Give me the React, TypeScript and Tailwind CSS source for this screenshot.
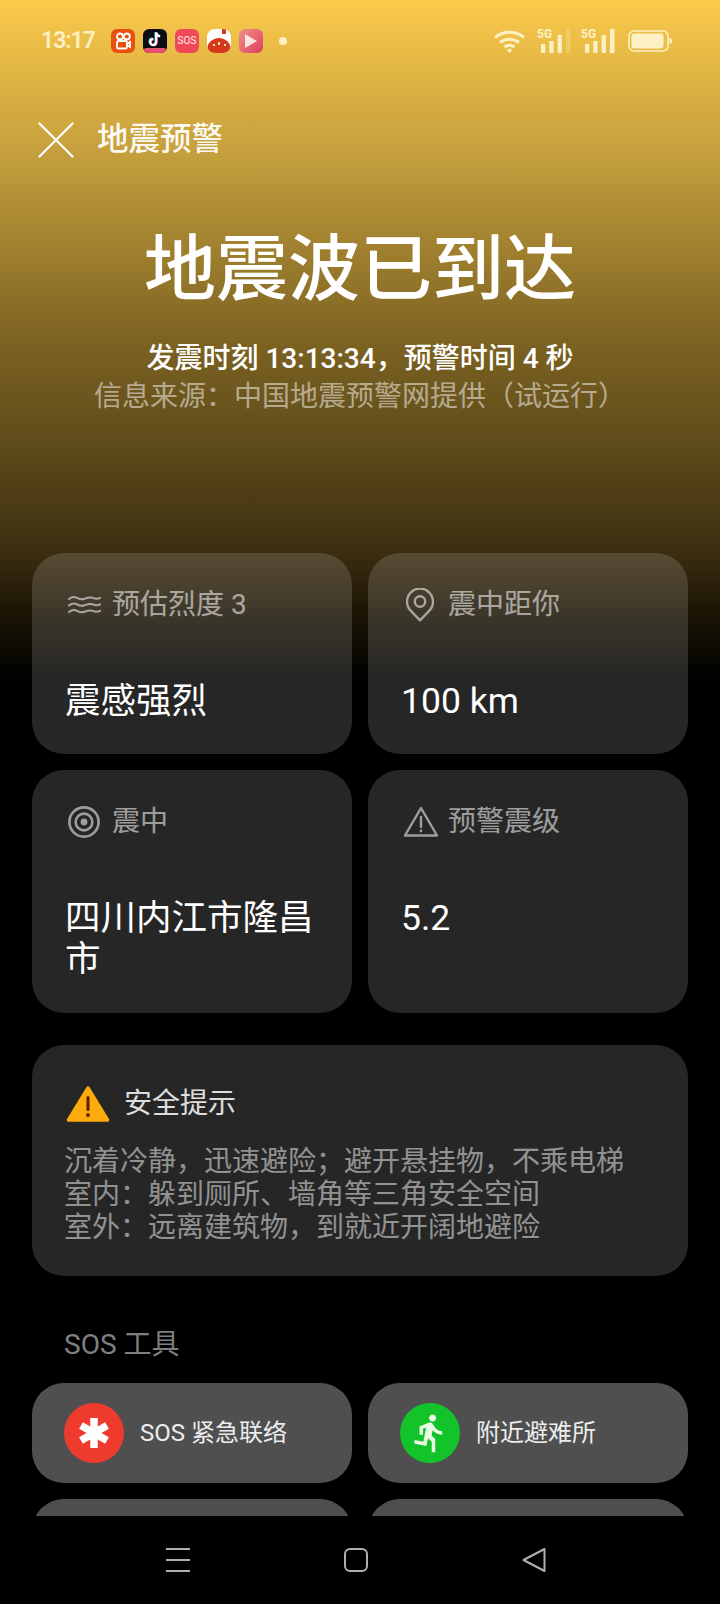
import { MdDirectionsRun } from 'react-icons/md';

const font = { fontFamily: 'Roboto, "Noto Sans CJK SC", sans-serif' };

function Waves() {
  return (
    <svg className="ml-[3px]" width="33" height="20" viewBox="0 0 33 20" fill="none" stroke="currentColor" strokeWidth="2" strokeLinecap="round">
      <path d="M1 4c3-2.600 5.500-2.600 8-1.200s5 2 7.500 1 5-2.200 8-1 5 1.600 7.500 0" />
      <path d="M1 10.500c3-2.600 5.500-2.600 8-1.200s5 2 7.500 1 5-2.200 8-1 5 1.600 7.500 0" />
      <path d="M1 17c3-2.600 5.500-2.600 8-1.200s5 2 7.500 1 5-2.200 8-1 5 1.600 7.500 0" />
    </svg>
  );
}

function Pin() {
  return (
    <svg className="ml-[5px]" width="28" height="34" viewBox="0 0 28 34" fill="none" stroke="currentColor" strokeWidth="2.400">
      <path d="M14 32.300 4.600 22.600A13 13 0 1 1 23.400 22.600Z" strokeLinejoin="round" />
      <circle cx="14" cy="13.500" r="5.200" />
    </svg>
  );
}

function Target() {
  return (
    <svg className="ml-[3px]" width="32" height="32" viewBox="0 0 32 32" fill="none" stroke="currentColor">
      <circle cx="16" cy="16" r="14.600" strokeWidth="2.600" />
      <circle cx="16" cy="16" r="8.400" strokeWidth="2.600" />
      <circle cx="16" cy="16" r="3.400" fill="currentColor" stroke="none" />
    </svg>
  );
}

function Warn() {
  return (
    <svg className="ml-[2px]" width="36" height="32" viewBox="0 0 36 32" fill="none" stroke="currentColor" strokeWidth="2.400" strokeLinejoin="round">
      <path d="M18 2 34 29.500H2Z" />
      <path d="M18 11v10" strokeLinecap="round" />
      <circle cx="18" cy="25" r="1.400" fill="currentColor" stroke="none" />
    </svg>
  );
}

function InfoCard({ icon, label, value, tall }: { icon: React.ReactNode; label: string; value: string; tall?: boolean }) {
  return (
    <div className={`rounded-[32px] bg-white/15 pl-[33px] pr-[32px] pt-[33px] ${tall ? 'h-[243px]' : 'h-[201px]'}`}>
      <div className="flex h-[38px] items-center text-white/55">
        <div className="flex w-[47px] justify-start">{icon}</div>
        <span className="text-[28px] leading-[38px]">{label}</span>
      </div>
      <div className="mt-[57px] text-[35.5px] leading-[41px] text-white">{value}</div>
    </div>
  );
}

function StatusIcons() {
  const bars = (last: string) => (
    <svg width="36" height="26" viewBox="0 0 36 26" fill="#fdf0c4">
      <text x="0" y="10" fontSize="12" fontWeight="700" style={font}>5G</text>
      <rect x="4" y="16" width="4.300" height="9" />
      <rect x="12.300" y="13" width="4.300" height="12" />
      <rect x="20.600" y="7" width="4.300" height="18" />
      <rect x="28.900" y="1" width="4.600" height="24" opacity={last} />
    </svg>
  );
  return (
    <div className="flex items-center">
      <svg width="33" height="25" viewBox="0 0 33 25" fill="none" stroke="#fdf0c4" strokeWidth="3">
        <path d="M2 8.500C10 1.500 23 1.500 31 8.500" />
        <path d="M7 13.500c5.500-4.500 13.500-4.500 19 0" />
        <path d="M11.500 18c3-2.200 7-2.200 10 0" />
        <path d="M14 21.500 16.500 19l2.500 2.500-2.500 2.500Z" fill="#fdf0c4" stroke="none" />
      </svg>
      <div className="ml-[11px]">{bars('0.25')}</div>
      <div className="ml-[8px]">{bars('1')}</div>
      <svg className="ml-[11px]" width="44" height="22" viewBox="0 0 44 22" fill="none">
        <rect x="1" y="1" width="39" height="20" rx="5" stroke="#fdf0c4" strokeWidth="1.600" />
        <rect x="3.500" y="3.500" width="32" height="15" rx="3" fill="#fdf0c4" />
        <path d="M41.500 8c1.500 0 2.500 1 2.500 3s-1 3-2.500 3Z" fill="#fdf0c4" />
      </svg>
    </div>
  );
}

function AppIcons() {
  return (
    <div className="ml-[18px] flex items-center gap-[8px]">
      <div className="h-[24px] w-[24px] rounded-[6px] bg-[#e8500f]">
        <svg width="24" height="24" viewBox="0 0 24 24" fill="none" stroke="#fff" strokeWidth="1.800">
          <circle cx="9" cy="7.500" r="3" />
          <circle cx="15.800" cy="7.500" r="3" />
          <rect x="6" y="12" width="10" height="7.500" rx="1.500" />
          <path d="M16 15l3-2v5l-3-2" />
        </svg>
      </div>
      <div className="relative h-[24px] w-[24px] overflow-hidden rounded-[6px] bg-[#0c0c14]">
        <svg width="24" height="24" viewBox="0 0 24 24" fill="none" strokeWidth="2.200">
          <path d="M13.200 3.500v9.500a3 3 0 1 1-3-3" stroke="#25f4ee" transform="translate(-0.600 -0.400)" />
          <path d="M13.200 3.500v9.500a3 3 0 1 1-3-3" stroke="#fe2c55" transform="translate(0.600 0.400)" />
          <path d="M13.200 3.500v9.500a3 3 0 1 1-3-3M13.200 3.500c.3 2.400 1.800 3.600 4 3.800" stroke="#fff" />
        </svg>
        <div className="absolute bottom-0 left-[1px] right-[1px] h-[5px] rounded-[2px] bg-[#e8506e]" />
      </div>
      <div className="flex h-[24px] w-[24px] items-center justify-center rounded-[6px] bg-[#f04a58] text-[10px] leading-none text-white/90">SOS</div>
      <div className="relative h-[24px] w-[24px] overflow-hidden rounded-[8px] bg-white">
        <div className="absolute bottom-0 left-0 right-0 h-[15px] rounded-t-[12px] bg-[#d5381a]" />
        <div className="absolute left-[15px] top-0 h-[5px] w-[4px] bg-[#d5381a]" />
        <div className="absolute left-[11px] top-[13px] h-[3px] w-[2px] bg-[#ffe0b0]" />
        <div className="absolute left-[6px] top-[15px] h-[2px] w-[2px] bg-[#ffe0b0]" />
        <div className="absolute left-[17px] top-[15px] h-[2px] w-[2px] bg-[#ffe0b0]" />
      </div>
      <div className="flex h-[24px] w-[24px] items-center justify-center rounded-[6px] bg-gradient-to-br from-[#f09088] to-[#dc3a5e]">
        <svg width="14" height="16" viewBox="0 0 14 16">
          <path d="M1 1 13 8 1 15Z" fill="#fde4dc" />
        </svg>
      </div>
      <div className="ml-[8px] h-[8px] w-[8px] rounded-full bg-[#fdf0c4]" />
    </div>
  );
}

function ToolButton({ color, icon, label }: { color: string; icon: React.ReactNode; label: string }) {
  return (
    <div className="flex h-[100px] items-center rounded-[32px] bg-[#4f4f4f] pl-[32px]">
      <div className={`flex h-[60px] w-[60px] items-center justify-center rounded-full ${color}`}>{icon}</div>
      <span className="ml-[16px] text-[24px] text-white/90">{label}</span>
    </div>
  );
}

export default function App() {
  return (
    <div className="flex h-[1604px] w-[720px] flex-col overflow-hidden bg-black" style={font}>
      <div className="h-[1516px] overflow-hidden bg-[linear-gradient(to_bottom,#fbca4b_0px,#c29d3c_160px,#7d6322_340px,#5d4a1a_450px,#3c2e10_550px,#181204_620px,#000000_680px)]">
        {/* status bar */}
        <div className="flex items-center justify-between pl-[41px] pr-[48px] pt-[26px]">
          <div className="flex items-center">
            <span className="w-[52px] text-[23px] font-semibold leading-[30px] tracking-[-1px] text-[#fdf0c4]">13:17</span>
            <AppIcons />
          </div>
          <StatusIcons />
        </div>

        {/* header */}
        <div className="mt-[59px] flex h-[50px] items-center pl-[38px]">
          <svg width="36" height="36" viewBox="0 0 36 36" stroke="#fff" strokeWidth="2.200" strokeLinecap="round">
            <path d="M1.500 1.500 34.500 34.500M34.500 1.500 1.500 34.500" />
          </svg>
          <span className="ml-[23px] text-[31.500px] font-medium leading-[50px] text-white/95">地震预警</span>
        </div>

        <div className="mt-[55px] text-center">
          <h1 className="text-[72px] font-medium leading-[100px] text-white">地震波已到达</h1>
          <p className="mt-[20px] text-[28px] font-medium leading-[37px] text-white">发震时刻 13:13:34，预警时间 4 秒</p>
          <p className="mt-[1px] text-[28px] leading-[37px] text-white/50">信息来源：中国地震预警网提供（试运行）</p>
        </div>

        {/* info cards */}
        <div className="mt-[138px] px-[32px]">
          <div className="grid grid-cols-2 gap-[16px]">
            <InfoCard icon={<Waves />} label="预估烈度 3" value="震感强烈" />
            <InfoCard icon={<Pin />} label="震中距你" value="100 km" />
            <InfoCard icon={<Target />} label="震中" value="四川内江市隆昌市" tall />
            <InfoCard icon={<Warn />} label="预警震级" value="5.2" tall />
          </div>

          {/* safety tips */}
          <div className="mt-[32px] h-[231px] rounded-[32px] bg-white/15 pl-[34px] pr-[32px] pt-[36px]">
            <div className="flex h-[46px] items-center">
              <svg width="44" height="38" viewBox="0 0 44 38">
                <path d="M22 3 41.500 35H2.500Z" fill="#fcab0c" stroke="#fcab0c" strokeWidth="3.500" strokeLinejoin="round" />
                <path d="M22 12.500v12" stroke="#5c1e00" strokeWidth="3" strokeLinecap="round" />
                <circle cx="22" cy="30" r="1.900" fill="#5c1e00" />
              </svg>
              <span className="ml-[14px] text-[28px] leading-[46px] text-white/85">安全提示</span>
            </div>
            <div className="-ml-[2px] mt-[18px] text-[28px] leading-[33px] text-white/50">
              <p>沉着冷静，迅速避险；避开悬挂物，不乘电梯</p>
              <p>室内：躲到厕所、墙角等三角安全空间</p>
              <p>室外：远离建筑物，到就近开阔地避险</p>
            </div>
          </div>

          <div className="ml-[32px] mt-[51px] text-[28px] leading-[36px] text-white/50">SOS 工具</div>

          {/* sos tools, cut off by the nav bar */}
          <div className="mt-[20px] grid grid-cols-2 gap-[16px]">
            <ToolButton
              color="bg-[#ee3b2e]"
              label="SOS 紧急联络"
              icon={
                <svg width="36" height="36" viewBox="0 0 36 36" stroke="#fff" strokeWidth="7.500">
                  <path d="M18 3v30M5 10.500l26 15M31 10.500l-26 15" />
                </svg>
              }
            />
            <ToolButton color="bg-[#12c42a]" label="附近避难所" icon={<MdDirectionsRun size={42} color="#eafbe6" />} />
            <div className="h-[100px] rounded-[32px] bg-[#4f4f4f]" />
            <div className="h-[100px] rounded-[32px] bg-[#4f4f4f]" />
          </div>
        </div>
      </div>

      {/* nav bar */}
      <div className="flex h-[88px] items-start bg-black pl-[166px] pt-[31px]">
        <svg width="24" height="26" viewBox="0 0 24 26" stroke="#b0b0b0" strokeWidth="2">
          <path d="M0 2h24M0 13h24M0 24h24" />
        </svg>
        <svg className="ml-[154px]" width="24" height="26" viewBox="0 0 24 26" fill="none" stroke="#b0b0b0" strokeWidth="2">
          <rect x="1" y="2" width="22" height="22" rx="5" />
        </svg>
        <svg className="ml-[154px]" width="24" height="26" viewBox="0 0 24 26" fill="none" stroke="#b0b0b0" strokeWidth="2" strokeLinejoin="round">
          <path d="M1.500 13 22.500 2v22Z" />
        </svg>
      </div>
    </div>
  );
}
